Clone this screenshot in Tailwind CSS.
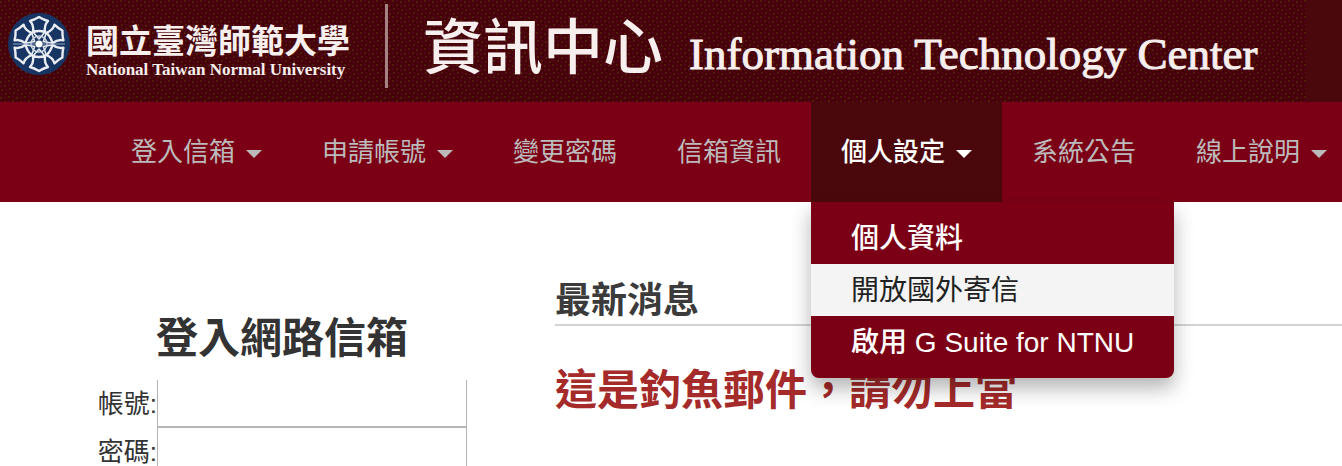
<!DOCTYPE html>
<html lang="zh-Hant">
<head>
<meta charset="utf-8">
<meta name="viewport" content="width=device-width, initial-scale=1">
<title>國立臺灣師範大學 資訊中心</title>
<script src="https://cdn.jsdelivr.net/npm/@tailwindcss/browser@4"></script>
</head>
<body class="flex h-screen flex-col overflow-hidden bg-white font-['Liberation_Sans','Noto_Sans_CJK_TC',sans-serif] text-[#333]">
  <header class="shrink-0 bg-[#4b080c] pr-9">
    <div class="relative h-[102px] font-['Liberation_Serif','Noto_Sans_CJK_TC',serif] text-[#f6efee]">
      <svg class="absolute inset-0 h-full w-full" aria-hidden="true" shape-rendering="crispEdges">
        <defs>
          <pattern id="weave" width="16" height="16" patternUnits="userSpaceOnUse">
            <rect width="16" height="16" fill="#4a0209"/>
            <path fill="#4c1e0e" d="M0 1h2v2H0zM8 0h2v2H8zM4 5h2v2H4zM12 4h2v2h-2zM1 9h2v2H1zM9 8h2v2H9zM5 13h2v2H5zM13 12h2v2h-2z"/>
            <path fill="#4d0622" d="M4 1h2v2H4zM12 0h2v2h-2zM0 5h2v2H0zM8 4h2v2H8zM5 9h2v2H5zM13 8h2v2h-2zM1 13h2v2H1zM9 12h2v2H9z"/>
            <path fill="#3f0006" d="M2 3h2v2H2zM10 2h2v2h-2zM6 7h2v2H6zM14 6h2v2h-2zM3 11h2v2H3zM11 10h2v2h-2zM7 14h2v2H7zM15 14h1v2h-1z"/>
          </pattern>
        </defs>
        <rect width="100%" height="100%" fill="url(#weave)"/>
      </svg>
      <div class="relative flex pl-2">
        <a href="#" class="flex pt-3" aria-label="國立臺灣師範大學">
          <svg class="mt-px size-[62px]" viewBox="-31 -31 62 62" aria-hidden="true">
            <defs>
              <g id="petal" fill="none" stroke="#e9edf3" stroke-linejoin="round">
                <path d="M-9-23Q-5-24 0-27Q5-24 9-23Q5-19 6-12Q0-14-6-12Q-5-19-9-23Z" stroke-width="2.4"/>
                <path d="M-6-12L0-5L6-12" stroke-width="1.6"/>
              </g>
            </defs>
            <circle r="31" fill="#173462"/>
            <use href="#petal"/>
            <use href="#petal" transform="rotate(60)"/>
            <use href="#petal" transform="rotate(120)"/>
            <use href="#petal" transform="rotate(180)"/>
            <use href="#petal" transform="rotate(240)"/>
            <use href="#petal" transform="rotate(300)"/>
            <circle r="8" fill="none" stroke="#cfd8e6" stroke-width="1.5"/>
            <path d="M-26 0H26" stroke="#8fa1bf" stroke-width="1"/>
            <circle r="3.5" fill="#fff"/>
          </svg>
          <span class="ml-4 flex flex-col pt-[10px]">
            <span class="text-[33px] leading-10 font-bold">國立臺灣師範大學</span>
            <span class="text-[17px] leading-4 font-bold">National Taiwan Normal University</span>
          </span>
        </a>
        <div class="mt-1 ml-[35px] h-[84px] w-[3px] bg-[#a48284]"></div>
        <h1 class="ml-[35px] flex items-baseline gap-[26px] font-normal whitespace-nowrap">
          <span class="text-[60px] leading-[98px] font-medium">資訊中心</span>
          <span class="text-[45px] [-webkit-text-stroke:1px_#f6efee]">Information Technology Center</span>
        </h1>
      </div>
    </div>
  </header>

  <nav class="relative z-10 shrink-0 bg-[#7c0015] pl-[101px]" aria-label="主選單">
    <ul class="flex h-[100px] text-[26px] whitespace-nowrap text-[#bbb]">
      <li><button type="button" class="flex h-full items-center gap-[11px] px-[30px]">登入信箱<svg class="mt-1 h-2 w-4 fill-current" viewBox="0 0 16 8" aria-hidden="true"><path d="M0 0h16L8 8z"/></svg></button></li>
      <li><button type="button" class="flex h-full items-center gap-[11px] px-[30px]">申請帳號<svg class="mt-1 h-2 w-4 fill-current" viewBox="0 0 16 8" aria-hidden="true"><path d="M0 0h16L8 8z"/></svg></button></li>
      <li><a href="#" class="flex h-full items-center px-[30px]">變更密碼</a></li>
      <li><a href="#" class="flex h-full items-center px-[30px]">信箱資訊</a></li>
      <li class="relative">
        <button type="button" aria-expanded="true" class="flex h-full items-center gap-[11px] bg-[#4b080c] px-[30px] font-medium text-white">個人設定<svg class="mt-1 h-2 w-4 fill-current" viewBox="0 0 16 8" aria-hidden="true"><path d="M0 0h16L8 8z"/></svg></button>
        <ul class="absolute top-full left-0 rounded-b-lg bg-[#7c0015] py-[10px] text-[28px] leading-[50px] font-medium text-white shadow-[0_10px_20px_rgba(0,0,0,0.3)]">
          <li><a href="#" class="block px-10 pt-[2px]">個人資料</a></li>
          <li><a href="#" class="block bg-[#f4f4f4] px-10 pt-[2px] font-normal text-[#222]">開放國外寄信</a></li>
          <li><a href="#" class="block px-10 pt-[2px]">啟用 G Suite for NTNU</a></li>
        </ul>
      </li>
      <li><a href="#" class="flex h-full items-center px-[30px]">系統公告</a></li>
      <li><button type="button" class="flex h-full items-center gap-[11px] px-[30px]">線上說明<svg class="mt-1 h-2 w-4 fill-current" viewBox="0 0 16 8" aria-hidden="true"><path d="M0 0h16L8 8z"/></svg></button></li>
    </ul>
  </nav>

  <main class="flex grow pl-[97px]">
    <form class="w-[370px] shrink-0 pt-[108px]">
      <h2 class="mb-3 text-center text-[42px] leading-[58px] font-bold">登入網路信箱</h2>
      <div class="flex items-center text-[26px]">
        <label for="account" class="flex w-[60px] shrink-0 justify-end whitespace-nowrap">帳號:</label>
        <input id="account" type="text" class="h-12 min-w-0 grow border-x border-b-2 border-[#b5b5b5] px-2 outline-none">
      </div>
      <div class="flex items-center text-[26px]">
        <label for="password" class="flex w-[60px] shrink-0 justify-end whitespace-nowrap">密碼:</label>
        <input id="password" type="password" class="h-12 min-w-0 grow border-x border-b-2 border-[#b5b5b5] px-2 outline-none">
      </div>
    </form>
    <section class="ml-[88px] grow pt-[76px]">
      <h2 class="border-b-2 border-[#d3d3d3] text-[36px] leading-[46px] font-bold text-[#3b3b3b]">最新消息</h2>
      <h3 class="mt-9 text-[42px] leading-[58px] font-bold text-[#a52a2a]">這是釣魚郵件，請勿上當</h3>
    </section>
  </main>
</body>
</html>
